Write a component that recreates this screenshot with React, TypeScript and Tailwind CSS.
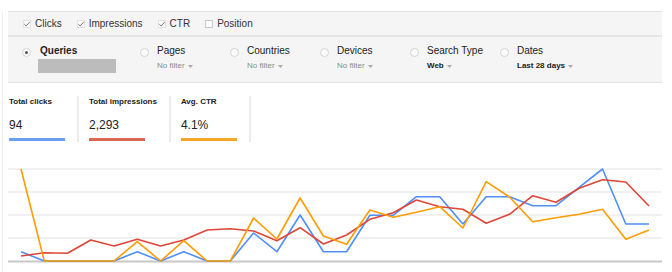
import React from 'react';

const orange = [169, 261, 261, 261, 261, 241.7, 261, 240.7, 261, 261, 218, 239, 198, 236, 244.3, 210, 217.3, 212.3, 206.7, 228, 181.7, 197, 221.7, 217.7, 214.3, 209.3, 239.3, 230];
const blue = [251.7, 261, 261, 261, 261, 251.7, 261, 251.7, 261, 261, 233, 251.7, 215, 251.7, 251.7, 215.3, 215.3, 196.7, 196.7, 224, 196.7, 196.7, 205.7, 205.7, 187.3, 169, 224, 224];
const red = [256, 252.7, 253.3, 240, 246, 239.3, 246, 240, 230, 228.7, 231, 240.7, 227.7, 244, 235, 219.3, 212.7, 200, 206.7, 209.3, 223.3, 214.3, 195.7, 202.3, 188.3, 179.7, 182, 206];

const toPoints = (ys: number[]) => ys.map((y, i) => `${(21 + i * 23.26).toFixed(1)},${y}`).join(' ');

const Caret = () => (
    <svg width="5" height="3" viewBox="0 0 5 3" className="ml-[3px] inline-block">
        <path d="M0 0 L5 0 L2.5 3 Z" fill="#aaa" />
    </svg>
);

const Check = ({ checked, label }: { checked: boolean; label: string }) => (
    <div className="flex items-center gap-[4px]">
        <svg width="8" height="8" viewBox="0 0 8 8">
            <rect x="0.5" y="0.5" width="7" height="7" fill="#fff" stroke={checked ? '#e2e2e2' : '#c8c8c8'} />
            {checked && <path d="M1.3 4.2 L3.2 6 L6.8 1.8" fill="none" stroke="#777" strokeWidth="1" />}
        </svg>
        <span>{label}</span>
    </div>
);

const Radio = ({ selected }: { selected?: boolean }) => (
    <div className="mt-[3px] size-[9px] shrink-0 rounded-full border border-[#d4d4d4] bg-[#fafafa] flex items-center justify-center">
        {selected && <div className="size-[3px] rounded-full bg-[#555]" />}
    </div>
);

const Dimension = ({ label, value, bold }: { label: string; value: string; bold?: boolean }) => (
    <div className="w-[90px] flex gap-[8px]">
        <Radio />
        <div className="flex flex-col">
            <span className="text-[10px] leading-[12px] text-[#222]">{label}</span>
            <span className={`mt-[4px] text-[8px] leading-[10px] flex items-center ${bold ? 'font-bold text-[#222]' : 'text-[#8a8a8a]'}`}>
                {value}
                <Caret />
            </span>
        </div>
    </div>
);

const Metric = ({ label, value, color, first }: { label: string; value: string; color: string; first?: boolean }) => (
    <div className={`flex flex-col pr-[12px] pb-[1px] border-r-2 border-[#ececec] ${first ? '' : 'pl-[10px]'}`}>
        <span className="mt-[1px] text-[8px] leading-[10px] font-bold text-[#222] whitespace-nowrap">{label}</span>
        <span className="mt-[11px] text-[12px] leading-[14px] text-[#222]">{value}</span>
        <div className={`mt-[6px] w-[56px] h-[3px] ${color}`} />
    </div>
);

const App = () => {
    return (
        <div className="w-[672px] h-[272px] bg-white overflow-hidden font-['Liberation_Sans',Arial,sans-serif]">
            <div className="ml-[2px] h-full border-l border-[#efefef]">
                <div className="ml-[5px] mt-[11px] w-[654px] bg-[#f5f5f5] border-t border-b border-[#e3e3e3]">
                    <div className="h-[23px] flex items-center pl-[15px] gap-[15px] text-[10px] text-[#333]">
                        <Check checked label="Clicks" />
                        <Check checked label="Impressions" />
                        <Check checked label="CTR" />
                        <Check checked={false} label="Position" />
                    </div>
                    <div className="h-[2px] bg-[#e6e6e6]" />
                    <div className="h-[45px] flex pl-[14px] pt-[8px]">
                        <div className="w-[118px] flex gap-[9px]">
                            <Radio selected />
                            <div className="flex flex-col">
                                <span className="text-[10px] leading-[12px] font-bold text-[#222]">Queries</span>
                                <div className="mt-[2px] -ml-[2px] w-[78px] h-[14px] bg-[#bcbcbc]" />
                            </div>
                        </div>
                        <Dimension label="Pages" value="No filter" />
                        <Dimension label="Countries" value="No filter" />
                        <Dimension label="Devices" value="No filter" />
                        <Dimension label="Search Type" value="Web" bold />
                        <Dimension label="Dates" value="Last 28 days" bold />
                    </div>
                </div>

                <div className="mt-[13px] pl-[6px] flex">
                    <Metric first label="Total clicks" value="94" color="bg-[#6a9ef2]" />
                    <Metric label="Total impressions" value="2,293" color="bg-[#dd6655]" />
                    <Metric label="Avg. CTR" value="4.1%" color="bg-[#f6a628]" />
                </div>

                <svg className="mt-[18px] ml-[5px] block" width="654" height="112" viewBox="8 160 654 112">
                    {[169, 192, 215, 238].map((y) => (
                        <line key={y} x1="8" x2="662" y1={y} y2={y} stroke="#e2e2e2" strokeWidth="1" />
                    ))}
                    <line x1="8" x2="662" y1="261.5" y2="261.5" stroke="#c8c8c8" strokeWidth="2" />
                    <polyline points={toPoints(blue)} fill="none" stroke="#4f8ff7" strokeWidth="1.6" strokeLinejoin="round" />
                    <polyline points={toPoints(red)} fill="none" stroke="#de4638" strokeWidth="1.6" strokeLinejoin="round" />
                    <polyline points={toPoints(orange)} fill="none" stroke="#ff9c00" strokeWidth="1.6" strokeLinejoin="round" />
                </svg>
            </div>
        </div>
    );
};

export default App;
